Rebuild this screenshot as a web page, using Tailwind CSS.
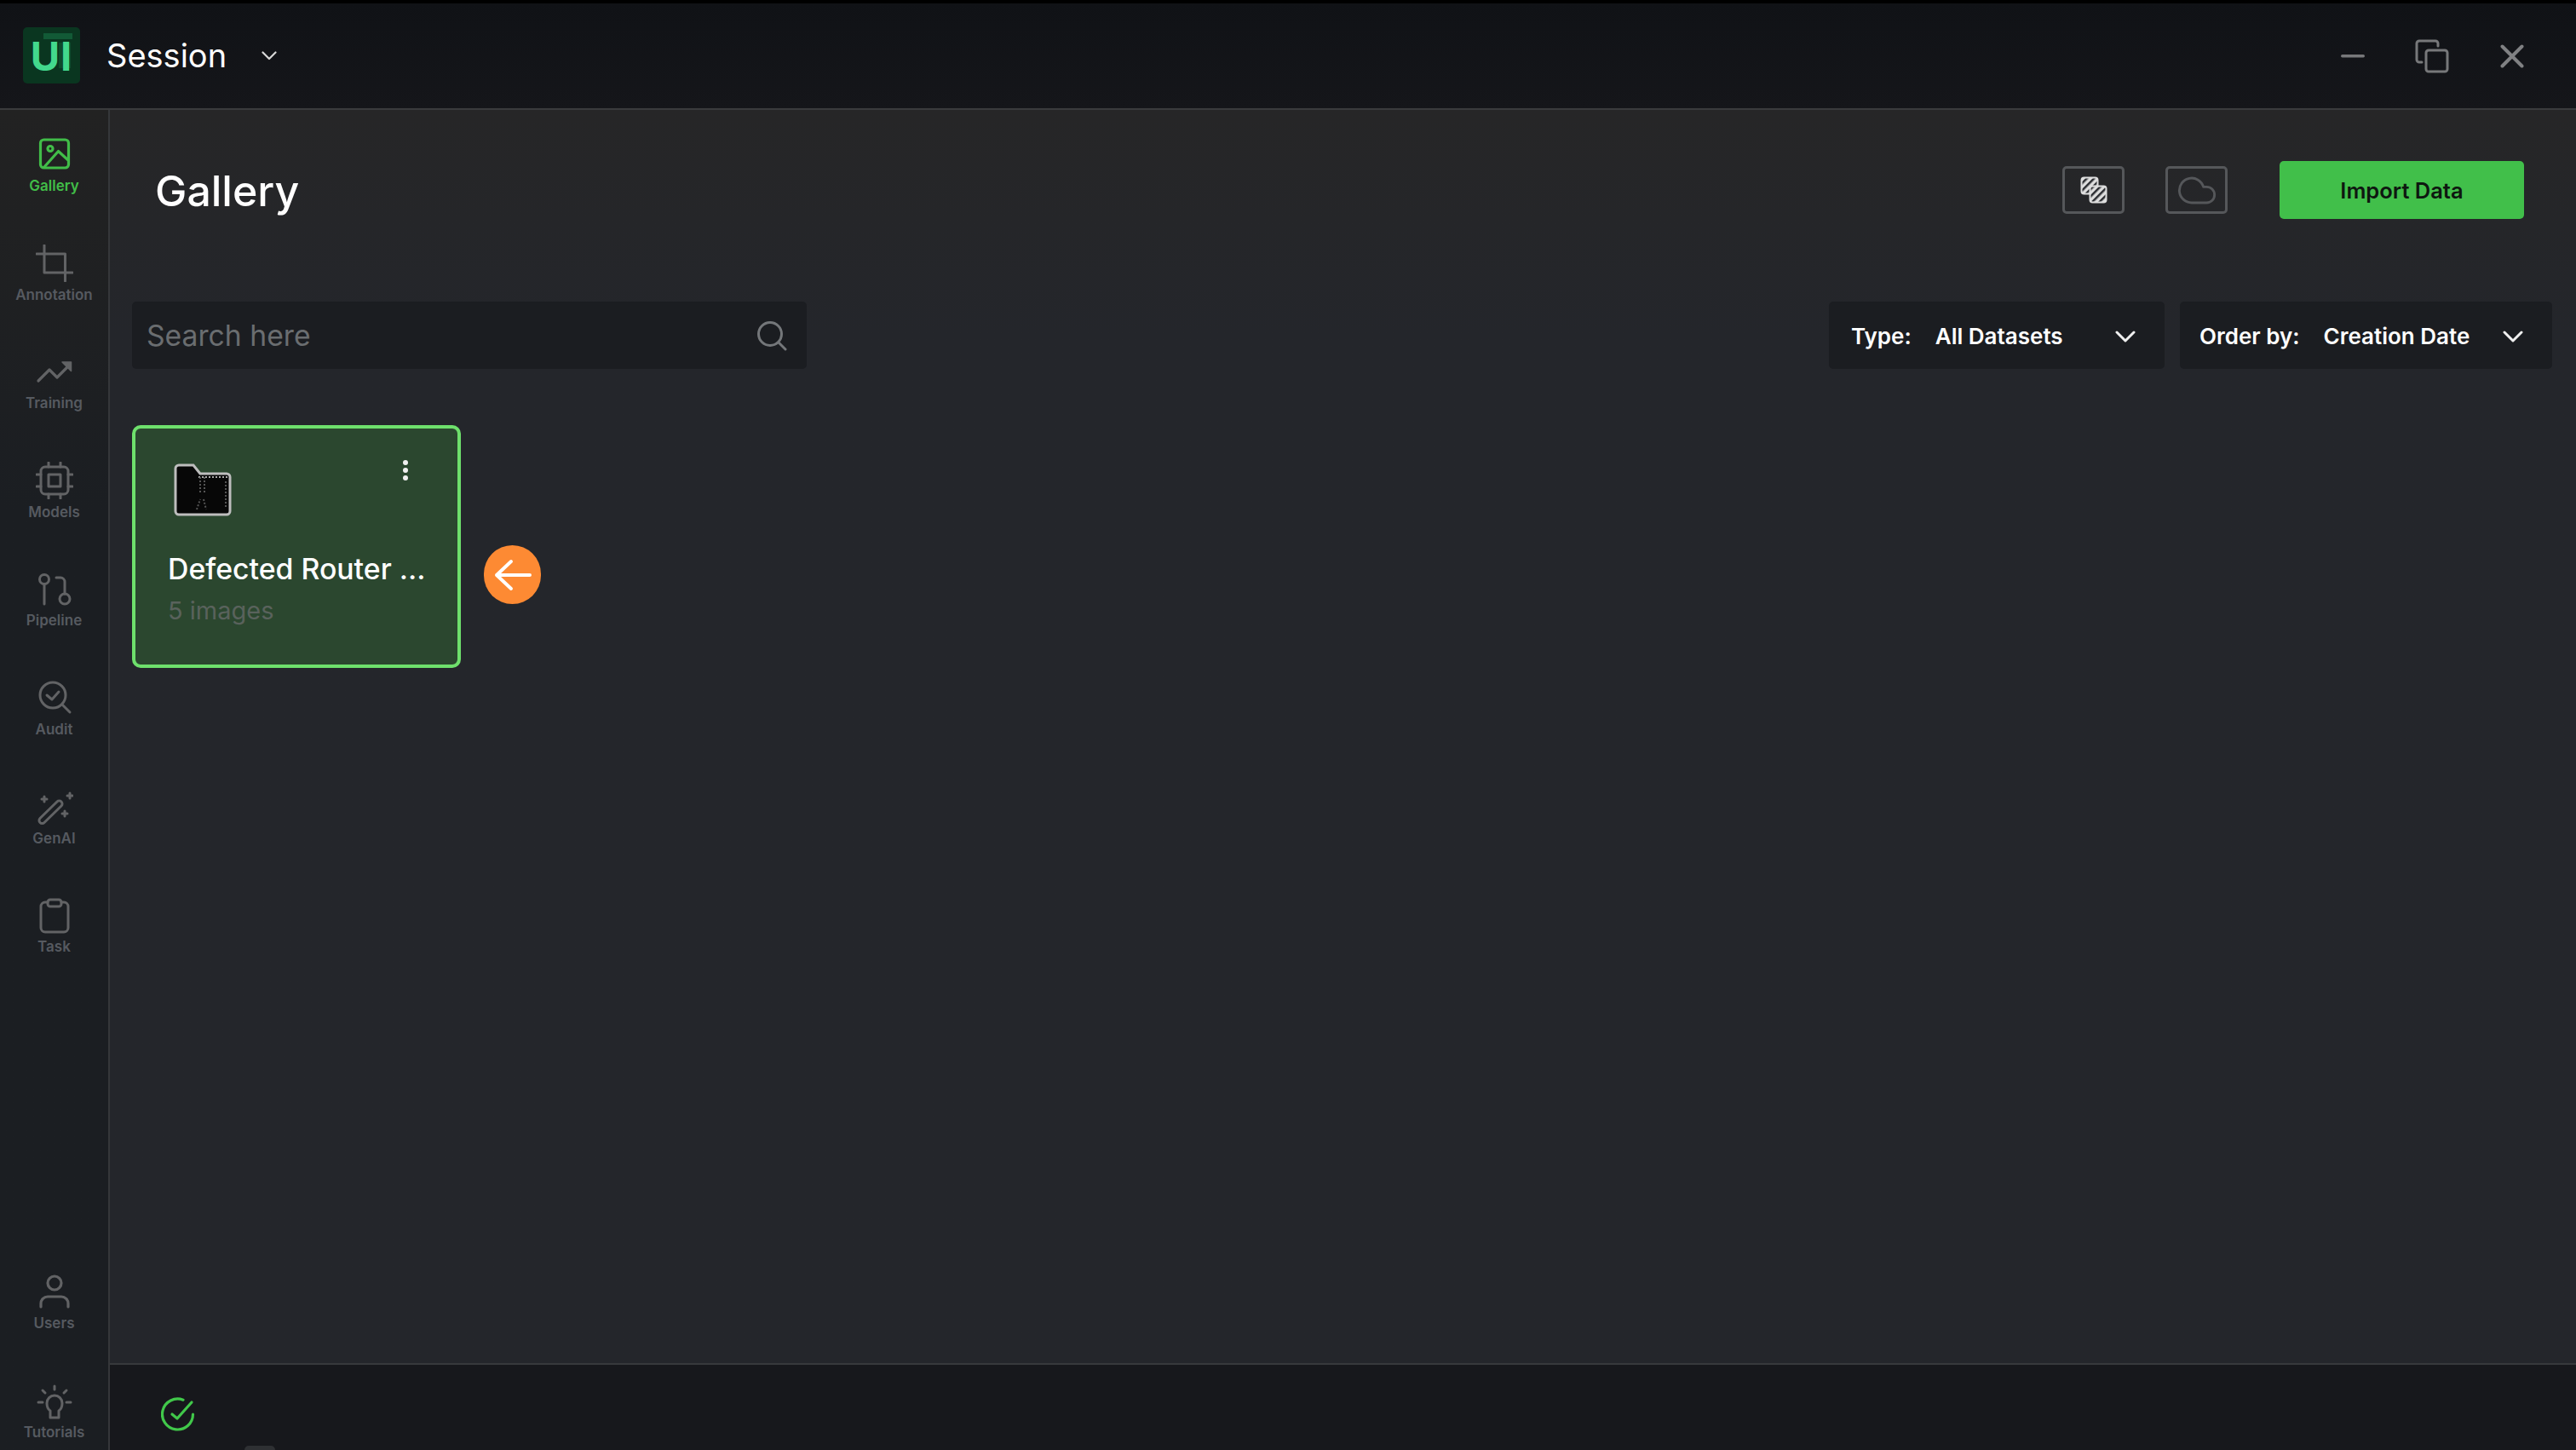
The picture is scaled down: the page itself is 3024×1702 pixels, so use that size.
<!DOCTYPE html>
<html lang="en">
<head>
<meta charset="utf-8">
<title>Gallery</title>
<script src="https://cdn.jsdelivr.net/npm/@tailwindcss/browser@4"></script>
</head>
<body class="bg-black">
<div class="w-[3024px] h-[1702px] flex flex-col overflow-hidden bg-[#24262b] font-['Inter','Liberation_Sans',sans-serif]">
  <div class="h-[4px] shrink-0 bg-black"></div>
  <header class="h-[125px] shrink-0 flex items-center justify-between border-b-[2px] border-[#3a3b3d] bg-linear-to-b from-[#101216] to-[#15161a] pl-[27px]">
    <div class="flex items-center -mt-[1px]">
      <div class="relative w-[67px] h-[66px] rounded-[5px] bg-[#0a3620] flex items-center justify-center overflow-hidden">
        <div class="absolute left-[24px] top-[7px] w-[34px] h-[7px] bg-[#125a36]"></div>
        <div class="absolute left-[42px] top-[18px] w-[14px] h-[30px] bg-[#0e4a2c]"></div>
        <span class="relative text-[#43d98d] text-[47px] leading-none font-bold tracking-[1px]">UI</span>
      </div>
      <span class="ml-[31px] text-[38px] leading-none text-white">Session</span>
      <svg class="ml-[41px]" width="18" height="11" viewBox="0 0 18 11" fill="none" stroke="#d8d8d8" stroke-width="2.2" stroke-linecap="round" stroke-linejoin="round"><path d="M1.5 1.5 9 9l7.5-7.5"/></svg>
    </div>
    <div class="flex items-center pr-[61px]">
      <svg width="30" height="4" viewBox="0 0 30 4"><rect width="28" height="3.5" x="1" rx="1.7" fill="#77787a"/></svg>
      <svg class="ml-[58px]" width="40" height="40" viewBox="0 0 40 40" fill="none" stroke="#77787a" stroke-width="3" stroke-linecap="round" stroke-linejoin="round"><path d="M8 27H5a3 3 0 0 1-3-3V5a3 3 0 0 1 3-3h19a3 3 0 0 1 3 3v3"/><rect x="13" y="13" width="25" height="25" rx="3"/></svg>
      <svg class="ml-[60px]" width="28" height="28" viewBox="0 0 28 28" fill="none" stroke="#808183" stroke-width="4" stroke-linecap="round"><path d="M2.5 2.5l23 23M25.500 2.500l-23 23"/></svg>
    </div>
  </header>

  <div class="flex-1 flex min-h-0">
    <aside class="w-[129px] shrink-0 flex flex-col border-r-[2px] border-[#35373a] bg-linear-to-b from-[#222222] to-[#1b1e22] to-30% pt-[30px] pb-[11px] text-[17px] leading-[20px] font-semibold text-[#565a60]">
      <div class="h-[127.6px] flex flex-col items-center gap-[5px] text-[#41bd48]">
        <svg width="44" height="44" viewBox="0 0 44 44" fill="none" stroke="#41bd48" stroke-width="3.2" stroke-linecap="round" stroke-linejoin="round"><rect x="5.500" y="5" width="33" height="33" rx="4"/><circle cx="17" cy="15.500" r="3"/><path d="M10 37 26.500 18.500 38 29"/></svg>
        <span>Gallery</span>
      </div>
      <div class="h-[127.6px] flex flex-col items-center gap-[5px]">
        <svg width="44" height="44" viewBox="0 0 44 44" fill="none" stroke="#626365" stroke-width="3" stroke-linecap="round" stroke-linejoin="round"><path d="M10 1V33H43M1 11H34.500V43"/></svg>
        <span>Annotation</span>
      </div>
      <div class="h-[127.6px] flex flex-col items-center gap-[5px]">
        <svg width="44" height="44" viewBox="0 0 44 44" fill="none" stroke="#626365" stroke-width="3.2" stroke-linecap="round" stroke-linejoin="round"><path d="M3 33 16 20l9 9 15-15"/><path d="M31 11h10.500v10.500z" fill="#626365" stroke-width="1.500"/></svg>
        <span>Training</span>
      </div>
      <div class="h-[127.6px] flex flex-col items-center gap-[5px]">
        <svg width="44" height="44" viewBox="0 0 44 44" fill="none" stroke="#626365" stroke-width="3" stroke-linecap="round" stroke-linejoin="round"><rect x="6" y="6" width="32" height="32" rx="5"/><rect x="15" y="15" width="14" height="14"/><path d="M15 1v5M29 1v5M15 38v5M29 38v5M1 15h5M1 29h5M38 15h5M38 29h5"/></svg>
        <span>Models</span>
      </div>
      <div class="h-[127.6px] flex flex-col items-center gap-[5px]">
        <svg width="44" height="44" viewBox="0 0 44 44" fill="none" stroke="#626365" stroke-width="3" stroke-linecap="round" stroke-linejoin="round"><circle cx="10" cy="11" r="5.500"/><path d="M10 16.500V40"/><circle cx="34" cy="34" r="6"/><path d="M24 9h5a5 5 0 0 1 5 5v14"/></svg>
        <span>Pipeline</span>
      </div>
      <div class="h-[127.6px] flex flex-col items-center gap-[5px]">
        <svg width="44" height="44" viewBox="0 0 44 44" fill="none" stroke="#626365" stroke-width="3" stroke-linecap="round" stroke-linejoin="round"><circle cx="20" cy="19" r="15"/><path d="M31 30l9 9"/><path d="M13 19l6 5 8-9"/></svg>
        <span>Audit</span>
      </div>
      <div class="h-[127.6px] flex flex-col items-center gap-[5px]">
        <svg width="44" height="44" viewBox="0 0 44 44" fill="none" stroke="#626365" stroke-width="3" stroke-linecap="round" stroke-linejoin="round"><path d="M5 40.500a3.500 3.500 0 0 0 5 0L30 21a3.500 3.500 0 0 0-5-5L5 35.500a3.500 3.500 0 0 0 0 5z"/><path d="M10 10v6M7 13h6M40 6v6M37 9h6M34 27v6M31 30h6"/></svg>
        <span>GenAI</span>
      </div>
      <div class="h-[127.6px] flex flex-col items-center gap-[5px]">
        <svg width="44" height="44" viewBox="0 0 44 44" fill="none" stroke="#626365" stroke-width="3" stroke-linecap="round" stroke-linejoin="round"><path d="M14 7H11a5 5 0 0 0-5 5v25a5 5 0 0 0 5 5h22a5 5 0 0 0 5-5V12a5 5 0 0 0-5-5h-3"/><rect x="14" y="4" width="16" height="8" rx="3"/></svg>
        <span>Task</span>
      </div>
      <div class="mt-auto h-[128px] flex flex-col items-center gap-[5px]">
        <svg width="44" height="44" viewBox="0 0 44 44" fill="none" stroke="#626365" stroke-width="3.200" stroke-linecap="round" stroke-linejoin="round"><circle cx="22" cy="12" r="8"/><path d="M6 40v-4a8 8 0 0 1 8-8h16a8 8 0 0 1 8 8v4"/></svg>
        <span>Users</span>
      </div>
      <div class="flex flex-col items-center gap-[5px]">
        <svg width="44" height="44" viewBox="0 0 44 44" fill="none" stroke="#626365" stroke-width="3" stroke-linecap="round" stroke-linejoin="round"><path d="M17 42v-8c-3-2-4-5-4-9a9 9 0 0 1 18 0c0 4-1 7-4 9v8z"/><path d="M22 5v4M8 10l3 3M36 10l-3 3M3 24h5M36 24h5"/></svg>
        <span>Tutorials</span>
      </div>
    </aside>

    <div class="flex-1 flex flex-col min-w-0">
      <main class="flex-1 min-h-0 bg-linear-to-b from-[#262627] to-[#24262b] to-[18%] pt-[60px] pl-[26px] pr-[28px]">
        <div class="h-[68px] flex items-center justify-between pl-[27px] pr-[33px]">
          <h1 class="pt-[2px] text-[50px] leading-none font-medium text-white">Gallery</h1>
          <div class="flex items-center">
            <div class="w-[73px] h-[56px] rounded-[5px] border-[3px] border-[#55575a] flex items-center justify-center">
              <svg width="32" height="32" viewBox="0 0 32 32">
                <defs><pattern id="hatch" width="6" height="6" patternUnits="userSpaceOnUse" patternTransform="rotate(45)"><rect width="6" height="6" fill="#dedede"/><rect width="2.500" height="6" fill="#2a2c30"/></pattern></defs>
                <rect x="1.500" y="1.500" width="19" height="19" rx="3" fill="url(#hatch)" stroke="#dedede" stroke-width="2"/>
                <rect x="11.500" y="11.500" width="19" height="19" rx="3" fill="url(#hatch)" stroke="#dedede" stroke-width="2"/>
              </svg>
            </div>
            <div class="ml-[48px] w-[73px] h-[56px] rounded-[5px] border-[3px] border-[#55575a] flex items-center justify-center">
              <svg width="46" height="33" viewBox="1 4 22 16" fill="none" stroke="#55575a" stroke-width="1.400" stroke-linecap="round" stroke-linejoin="round"><path d="M17.500 19H9a7 7 0 1 1 6.710-9h1.790a4.500 4.500 0 1 1 0 9Z"/></svg>
            </div>
            <button class="ml-[61px] w-[287px] h-[68px] pt-[2px] rounded-[5px] bg-[#41bf4a] text-[25.5px] font-semibold text-[#0e1710]">Import Data</button>
          </div>
        </div>

        <div class="mt-[97px] flex items-center justify-between">
          <div class="w-[792px] h-[79px] rounded-[5px] bg-[#1b1d21] flex items-center justify-between pl-[17px] pr-[23px]">
            <span class="pt-[1px] text-[33.7px] text-[#6a6d70]">Search here</span>
            <svg width="36" height="36" viewBox="0 0 36 36" fill="none" stroke="#74777a" stroke-width="3" stroke-linecap="round"><circle cx="16" cy="16" r="13.500"/><path d="M26 26l8 8"/></svg>
          </div>
          <div class="flex items-center gap-[18px]">
            <div class="w-[394px] h-[79px] pt-[2px] rounded-[5px] bg-[#1b1d21] flex items-center pl-[26px] text-[26px] font-semibold text-white">
              <span>Type:</span>
              <span class="ml-[28px]">All Datasets</span>
              <svg class="ml-[61px]" width="24" height="14" viewBox="0 0 24 14" fill="none" stroke="#f0f0f0" stroke-width="3" stroke-linecap="round" stroke-linejoin="round"><path d="M2 2l10 10L22 2"/></svg>
            </div>
            <div class="w-[437px] h-[79px] pt-[2px] rounded-[5px] bg-[#1b1d21] flex items-center pl-[23px] text-[26px] font-semibold text-white">
              <span>Order by:</span>
              <span class="ml-[28px]">Creation Date</span>
              <svg class="ml-[39px]" width="24" height="14" viewBox="0 0 24 14" fill="none" stroke="#f0f0f0" stroke-width="3" stroke-linecap="round" stroke-linejoin="round"><path d="M2 2l10 10L22 2"/></svg>
            </div>
          </div>
        </div>

        <div class="relative mt-[66px] w-[386px] h-[285px] rounded-[10px] border-[4px] border-[#6ee06c] bg-[#2b472f]">
          <svg class="absolute left-[44px] top-[40px]" width="70" height="64" viewBox="0 0 70 64">
            <path d="M3 7a4 4 0 0 1 4-4h17l8 10h31a4 4 0 0 1 4 4v40a4 4 0 0 1-4 4H7a4 4 0 0 1-4-4z" fill="#070707" stroke="#bdbdbd" stroke-width="3"/>
            <path d="M30 17H65" stroke="#a9a9a9" stroke-width="2" stroke-dasharray="2 2"/>
            <path d="M32 17V35M37 17V35M28 55l4-12M36 43l3 12M62 22v32" stroke="#555" stroke-width="2" stroke-dasharray="2 2" fill="none"/>
          </svg>
          <svg class="absolute left-[312px] top-[35px]" width="10" height="34" viewBox="0 0 10 34" fill="#f0f0f0"><circle cx="5" cy="5" r="3"/><circle cx="5" cy="14" r="3"/><circle cx="5" cy="23" r="3"/></svg>
          <div class="pt-[145px] pl-[38px]">
            <p class="text-[33.8px] leading-[40px] font-medium text-white whitespace-nowrap">Defected Router ...</p>
            <p class="mt-[9px] text-[29px] leading-[40px] text-[#59625c]">5 images</p>
          </div>
          <div class="absolute left-[409px] top-[137px] w-[67px] h-[69px] rounded-full bg-[#fd8a33] flex items-center justify-center">
            <svg width="44" height="38" viewBox="0 0 44 38" fill="none" stroke="#ffffff" stroke-width="4" stroke-linecap="round" stroke-linejoin="round"><path d="M20 3 3 19l17 16M3 19h39"/></svg>
          </div>
        </div>
      </main>
      <footer class="relative h-[102px] shrink-0 border-t-[2px] border-[#37393c] bg-[#17181c] pl-[60px] pt-[38px]">
        <svg width="40" height="40" viewBox="0 0 40 40" fill="none" stroke="#41c84a" stroke-width="3.200" stroke-linecap="round" stroke-linejoin="round"><path d="M37.500 20A18 18 0 1 1 26 3.200"/><path d="M13 20l6 5 17-19"/></svg>
        <div class="absolute left-[158px] bottom-0 w-[36px] h-[5px] rounded-t-full bg-[#2e3033]"></div>
      </footer>
    </div>
  </div>
</div>
</body>
</html>
